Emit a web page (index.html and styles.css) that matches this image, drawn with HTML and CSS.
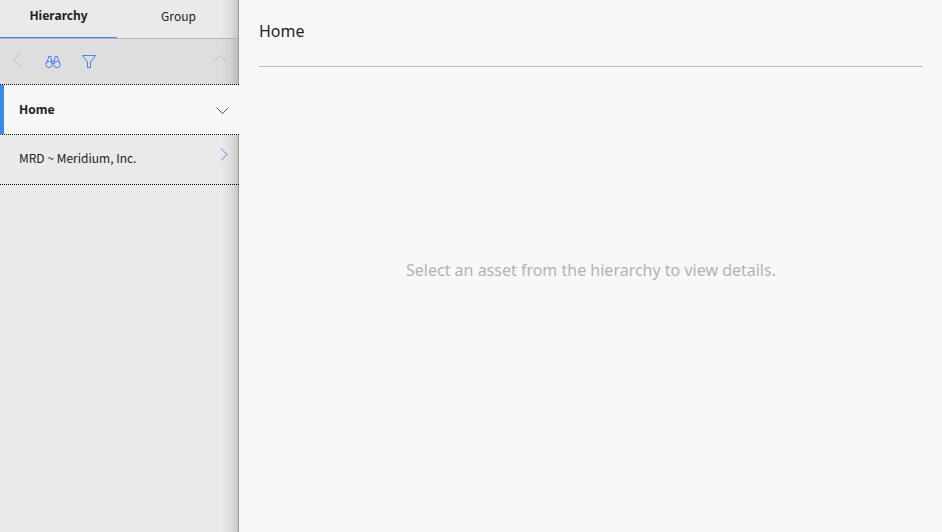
FILE: index.html
```html
<!DOCTYPE html>
<html lang="en">
<head>
<meta charset="utf-8">
<title>Asset Hierarchy</title>
<link rel="stylesheet" href="styles.css">
</head>
<body>
<div class="app">
  <aside class="sidebar">
    <nav class="tabs">
      <button class="tab tab-active" type="button">Hierarchy</button>
      <button class="tab" type="button">Group</button>
    </nav>
    <div class="toolbar">
      <button class="tool" type="button" aria-label="Back">
        <svg class="muted" width="16" height="16" viewBox="0 0 16 16"><path d="M11.500 -1.500 4.500 5.500l7 7"/></svg>
      </button>
      <button class="tool" type="button" aria-label="Search">
        <svg width="16" height="16" viewBox="0 0 16 16"><circle cx="4" cy="10.500" r="3.200"/><circle cx="12" cy="10.500" r="3.200"/><path d="M1 9.500 3.500 4V2.500h2.500V4L7.200 9.500M15 9.500 12.500 4V2.500H10V4L8.800 9.500M6.500 7h3M7 9.500h2"/></svg>
      </button>
      <button class="tool" type="button" aria-label="Filter">
        <svg width="16" height="16" viewBox="0 0 16 16"><path d="M1.500 1.500h13L9.500 8v5.500h-3V8z"/></svg>
      </button>
      <button class="tool tool-end" type="button" aria-label="Up">
        <svg class="muted" width="16" height="16" viewBox="0 0 16 16"><path d="M1 8.500 8 1.500l7 7"/></svg>
      </button>
    </div>
    <ul class="tree">
      <li><button class="node node-active" type="button"><span>Home</span>
        <svg class="dark" width="16" height="16" viewBox="0 0 16 16"><path d="M1.500 5.500 7.500 11.500 13.500 5.500"/></svg></button></li>
      <li><button class="node" type="button"><span>MRD ~ Meridium, Inc.</span>
        <svg class="next" width="16" height="16" viewBox="0 0 16 16"><path d="M6 1.500 12 7.500 6 13.500"/></svg></button></li>
    </ul>
  </aside>
  <main class="content">
    <h1 class="title">Home</h1>
    <p class="empty">Select an asset from the hierarchy to view details.</p>
  </main>
</div>
</body>
</html>
```
FILE: styles.css
```css
* {
  box-sizing: border-box;
}

body {
  margin: 0;
  font-family: "Noto Sans", sans-serif;
  font-size: 12px;
  color: #222;
  background: #f8f8f8;
}

button {
  font: inherit;
  color: inherit;
  background: none;
  border: 0;
  padding: 0;
}

svg {
  display: block;
  flex: none;
  overflow: visible;
  fill: none;
  stroke: #4b83ee;
  stroke-width: 1;
}

.muted {
  stroke: #bebebe;
}

.dark {
  stroke: #4d5665;
}

.app {
  display: grid;
  grid-template-columns: 239px 1fr;
  min-height: 100vh;
}

.sidebar {
  background: linear-gradient(to right, transparent calc(100% - 18px), rgba(0, 0, 0, 0.04) calc(100% - 9px), rgba(0, 0, 0, 0.15)) #eaeaea;
  border-right: 1px solid #999;
}

.tabs {
  display: grid;
  grid-template-columns: 117px 1fr;
  height: 39px;
  border-bottom: 1px solid #b3b3b8;
}

.tab,
.node {
  font-family: "Noto Sans CJK SC", "Noto Sans", sans-serif;
}

.tab {
  padding: 0 0 6px 2px;
  border-bottom: 1px solid transparent;
}

.tab-active,
.node-active {
  font-family: "Noto Sans", sans-serif;
  font-weight: 700;
}

.tab-active {
  padding-left: 0;
  border-color: #3f87e8;
}

.toolbar {
  display: flex;
  align-items: center;
  gap: 20px;
  height: 45px;
  padding: 0 10px 0 9px;
  background: rgba(0, 0, 0, 0.05);
}

.tool-end {
  margin-left: auto;
}

.tree {
  list-style: none;
  margin: 0 -1px 0 0;
  padding: 0;
  border-top: 1px dotted #000;
}

.node {
  display: flex;
  align-items: center;
  justify-content: space-between;
  width: 100%;
  height: 50px;
  padding: 0 8px 4px 19px;
  border-bottom: 1px dotted #000;
}

.node-active {
  padding: 0 8px 0 15px;
  background: #f8f8f8;
  border-left: 4px solid #3f87e8;
}

.next {
  margin-bottom: 6px;
}

.content {
  display: flex;
  flex-direction: column;
  padding: 0 19px 0 20px;
}

.title {
  margin: 0;
  height: 67px;
  padding-top: 20px;
  font-size: 16px;
  line-height: 22px;
  font-weight: 400;
  border-bottom: 1px solid #b9b9be;
}

.empty {
  margin: 192px 0 0;
  text-align: center;
  font-size: 16px;
  line-height: 22px;
  color: #b3b3b3;
}
```
